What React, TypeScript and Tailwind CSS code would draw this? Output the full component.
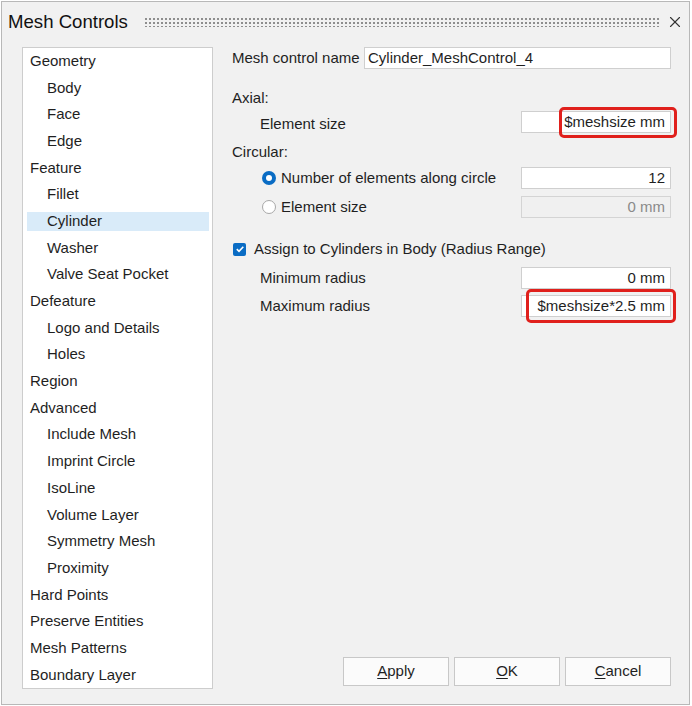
import React from "react";
import { X } from "lucide-react";

type Item = { label: string; child?: boolean; selected?: boolean };

const items: Item[] = [
  { label: "Geometry" },
  { label: "Body", child: true },
  { label: "Face", child: true },
  { label: "Edge", child: true },
  { label: "Feature" },
  { label: "Fillet", child: true },
  { label: "Cylinder", child: true, selected: true },
  { label: "Washer", child: true },
  { label: "Valve Seat Pocket", child: true },
  { label: "Defeature" },
  { label: "Logo and Details", child: true },
  { label: "Holes", child: true },
  { label: "Region" },
  { label: "Advanced" },
  { label: "Include Mesh", child: true },
  { label: "Imprint Circle", child: true },
  { label: "IsoLine", child: true },
  { label: "Volume Layer", child: true },
  { label: "Symmetry Mesh", child: true },
  { label: "Proximity", child: true },
  { label: "Hard Points" },
  { label: "Preserve Entities" },
  { label: "Mesh Patterns" },
  { label: "Boundary Layer" },
];

const Field = ({ value, disabled }: { value: string; disabled?: boolean }) => (
  <div
    className={`w-[150px] h-[22px] border flex items-center justify-end px-[5px] ${
      disabled
        ? "bg-[#f0f0f0] border-[#d4d4d4] text-[#8a8a8a]"
        : "bg-white border-[#cfcfcf] text-[#1f1f1f]"
    }`}
  >
    {value}
  </div>
);

// red callout drawn around a field
const Marked = ({ value, boxClass }: { value: string; boxClass: string }) => (
  <div className="relative">
    <Field value={value} />
    <div
      className={`absolute border-[3px] border-[#e0201c] rounded-[5px] ${boxClass}`}
    />
  </div>
);

const Radio = ({ checked }: { checked?: boolean }) =>
  checked ? (
    <span className="w-[14px] h-[14px] rounded-full bg-[#0a6cc4] flex items-center justify-center">
      <span className="w-[6px] h-[6px] rounded-full bg-white" />
    </span>
  ) : (
    <span className="w-[14px] h-[14px] rounded-full border border-[#a8a8a8] bg-white" />
  );

const Button = ({ hot, rest }: { hot: string; rest: string }) => (
  <button className="w-[106px] h-[29px] border border-[#c8c8c8] bg-[#fbfbfb] text-[15px] text-[#1f1f1f]">
    <span className="underline underline-offset-2">{hot}</span>
    {rest}
  </button>
);

export default function App() {
  return (
    <div
      className="w-[692px] h-[706px] bg-white p-px"
      style={{ fontFamily: '"Liberation Sans", Arial, sans-serif' }}
    >
      <div className="w-[689px] h-[704px] border border-[#b8b8b8] bg-[#f1f1f1] flex flex-col text-[15px] text-[#1f1f1f]">
        {/* title bar */}
        <div className="h-[39px] flex items-center pl-[6px] pr-[5px] shrink-0">
          <span className="text-[18.6px] text-[#111]">Mesh Controls</span>
          <div className="ml-[16px] flex-1 h-[10px] bg-[radial-gradient(circle,#8e8e8e_0.8px,transparent_1.2px)] bg-[length:4px_4px]" />
          <X size={18} strokeWidth={1.5} className="ml-[6px] text-[#333]" />
        </div>

        <div className="flex flex-1 pl-[20px] pr-[18px] pt-[6px] pb-[15px]">
          {/* tree list */}
          <div className="w-[191px] h-[642px] bg-white border border-[#cdcdcd] shrink-0 flex flex-col">
            {items.map((it) => (
              <div
                key={it.label}
                className="h-[26.7px] flex items-center pl-[4px] pr-[3px]"
              >
                <div
                  className={`w-full h-[19px] flex items-center ${
                    it.child ? "pl-[20px]" : "pl-[3px]"
                  } ${it.selected ? "bg-[#d9ebf9]" : ""}`}
                >
                  {it.label}
                </div>
              </div>
            ))}
          </div>

          {/* form */}
          <div className="ml-[19px] flex-1 flex flex-col">
            <div className="h-[22px] flex items-center justify-between">
              <span>Mesh control name</span>
              <div className="w-[307px] h-[22px] bg-white border border-[#cfcfcf] flex items-center px-[3px]">
                Cylinder_MeshControl_4
              </div>
            </div>

            <div className="mt-[19px] h-[20px] flex items-center">Axial:</div>
            <div className="h-[28px] flex items-center justify-between">
              <span className="pl-[28px] pt-[4px]">Element size</span>
              <div className="h-[27px] flex items-center">
                <Marked value="$meshsize mm" boxClass="left-[38px] -right-[6px] -top-[4px] -bottom-[5px]" />
              </div>
            </div>

            <div className="mt-[6px] h-[20px] flex items-center">Circular:</div>
            <div className="mt-[5px] h-[22px] flex items-center justify-between">
              <span className="pl-[30px] flex items-center gap-[5px]">
                <Radio checked />
                Number of elements along circle
              </span>
              <Field value="12" />
            </div>
            <div className="mt-[7px] h-[22px] flex items-center justify-between">
              <span className="pl-[30px] flex items-center gap-[5px]">
                <Radio />
                Element size
              </span>
              <Field value="0 mm" disabled />
            </div>

            <div className="mt-[20px] h-[22px] flex items-center gap-[8px]">
              <span className="w-[13px] h-[13px] ml-px rounded-[2px] bg-[#0a6cc4] flex items-center justify-center">
                <svg width="10" height="10" viewBox="0 0 10 10">
                  <path
                    d="M1.8 5.2 L4 7.3 L8.3 2.8"
                    fill="none"
                    stroke="white"
                    strokeWidth="1.6"
                  />
                </svg>
              </span>
              Assign to Cylinders in Body (Radius Range)
            </div>
            <div className="mt-[7px] h-[22px] flex items-center justify-between">
              <span className="pl-[28px]">Minimum radius</span>
              <Field value="0 mm" />
            </div>
            <div className="mt-[6px] h-[22px] flex items-center justify-between">
              <span className="pl-[28px]">Maximum radius</span>
              <Marked value="$meshsize*2.5 mm" boxClass="left-[5px] -right-[5px] -top-[6px] -bottom-[6px]" />
            </div>

            <div className="mt-auto flex justify-end gap-[5px] pb-[3px]">
              <Button hot="A" rest="pply" />
              <Button hot="O" rest="K" />
              <Button hot="C" rest="ancel" />
            </div>
          </div>
        </div>
      </div>
    </div>
  );
}
